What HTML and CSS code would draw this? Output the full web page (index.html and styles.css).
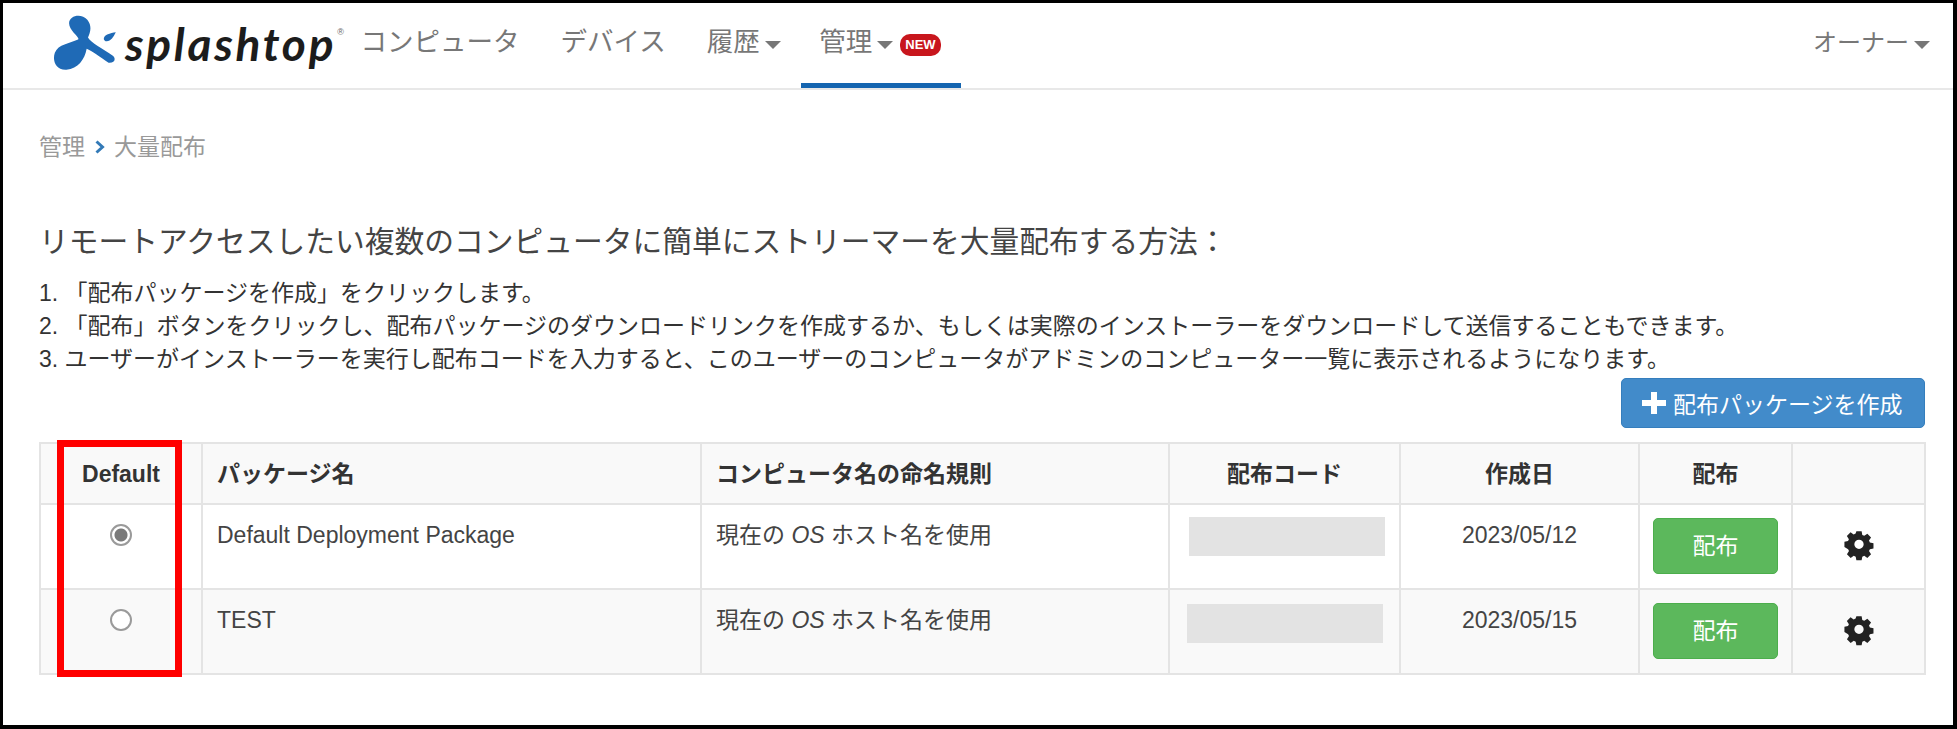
FILE: index.html
```html
<!DOCTYPE html>
<html lang="ja">
<head>
<meta charset="utf-8">
<title>大量配布</title>
<link rel="stylesheet" href="styles.css">
</head>
<body>
<div class="frame">
  <header class="topbar">
    <a class="logo">
      <svg class="logo-mark" viewBox="65 38 195 175" aria-hidden="true"><path d="M113 68C114 45 150 38 168 58C184 78 176 98 170 112C178 128 215 145 246 168C256 178 248 190 232 188C205 170 182 152 166 146C160 178 140 207 105 209C72 211 62 180 70 158C80 132 115 130 140 118C148 112 112 92 113 68Z"/><path d="M254 96C247 110 237 126 223 123C214 119 217 108 228 103C237 99 246 97 254 96Z"/></svg>
      <span class="logo-word">splashtop</span><span class="logo-reg">®</span>
    </a>
    <nav class="nav">
      <a class="nav-item">コンピュータ</a>
      <a class="nav-item">デバイス</a>
      <a class="nav-item">履歴<i class="caret"></i></a>
      <a class="nav-item active">管理<i class="caret"></i><span class="badge">NEW</span></a>
    </nav>
    <a class="owner">オーナー<i class="caret"></i></a>
  </header>
  <main class="content">
    <div class="crumbs"><span>管理</span><svg class="crumb-sep" viewBox="0 0 10 14" aria-hidden="true"><path d="M2 1.5L8 7L2 12.5"/></svg><span>大量配布</span></div>
    <h2 class="title">リモートアクセスしたい複数のコンピュータに簡単にストリーマーを大量配布する方法：</h2>
    <ol class="steps">
      <li>1. 「配布パッケージを作成」をクリックします。</li>
      <li>2. 「配布」ボタンをクリックし、配布パッケージのダウンロードリンクを作成するか、もしくは実際のインストーラーをダウンロードして送信することもできます。</li>
      <li>3. ユーザーがインストーラーを実行し配布コードを入力すると、このユーザーのコンピュータがアドミンのコンピューター一覧に表示されるようになります。</li>
    </ol>
    <div class="actions">
      <button class="btn-create"><svg class="plus" viewBox="0 0 24 22" aria-hidden="true"><path d="M9 0h6v8h9v6h-9v8H9v-8H0V8h9z"/></svg>配布パッケージを作成</button>
    </div>
    <div class="table-wrap">
      <table class="packages">
        <colgroup><col class="c1"><col class="c2"><col class="c3"><col class="c4"><col class="c5"><col class="c6"><col class="c7"></colgroup>
        <thead>
          <tr><th>Default</th><th class="left">パッケージ名</th><th class="left">コンピュータ名の命名規則</th><th>配布コード</th><th>作成日</th><th>配布</th><th></th></tr>
        </thead>
        <tbody>
          <tr>
            <td class="center"><span class="radio on"></span></td>
            <td>Default Deployment Package</td>
            <td>現在の <i>OS</i> ホスト名を使用</td>
            <td class="code"><div class="mask"></div></td>
            <td class="center">2023/05/12</td>
            <td class="center act"><button class="btn-go">配布</button></td>
            <td class="center act"><svg class="gear" viewBox="0 0 28 28" aria-hidden="true"><path fill-rule="evenodd" d="M11.300 1h5.400l.7 3.700 2 .9 3.200-2.100 3.800 3.800-2.100 3.200.9 2 3.700.7v5.400l-3.700.7-.9 2 2.100 3.200-3.800 3.800-3.200-2.100-2 .9-.7 3.700h-5.400l-.7-3.700-2-.9-3.200 2.100-3.800-3.800 2.100-3.200-.9-2L-1 17.100v-5.400l3.700-.7.9-2-2.100-3.200 3.800-3.800 3.200 2.100 2-.9zM14 9.500a4.800 4.800 0 1 0 0 9.600 4.800 4.800 0 0 0 0-9.600z" transform="translate(2.800 2.800) scale(.8)"/></svg></td>
          </tr>
          <tr>
            <td class="center"><span class="radio"></span></td>
            <td>TEST</td>
            <td>現在の <i>OS</i> ホスト名を使用</td>
            <td class="code"><div class="mask alt"></div></td>
            <td class="center">2023/05/15</td>
            <td class="center act"><button class="btn-go">配布</button></td>
            <td class="center act"><svg class="gear" viewBox="0 0 28 28" aria-hidden="true"><path fill-rule="evenodd" d="M11.300 1h5.400l.7 3.700 2 .9 3.200-2.100 3.800 3.800-2.100 3.200.9 2 3.700.7v5.400l-3.700.7-.9 2 2.100 3.200-3.800 3.800-3.200-2.100-2 .9-.7 3.700h-5.400l-.7-3.700-2-.9-3.200 2.100-3.800-3.800 2.100-3.200-.9-2L-1 17.100v-5.400l3.700-.7.9-2-2.100-3.200 3.800-3.800 3.200 2.100 2-.9zM14 9.500a4.800 4.800 0 1 0 0 9.600 4.800 4.800 0 0 0 0-9.600z" transform="translate(2.800 2.800) scale(.8)"/></svg></td>
          </tr>
        </tbody>
      </table>
      <div class="callout"></div>
    </div>
  </main>
</div>
</body>
</html>
```
FILE: styles.css
```css
* { box-sizing: border-box; }
html, body { margin: 0; padding: 0; background: #fff; }
body { width: 1957px; height: 729px; overflow: hidden; font-family: "Liberation Sans", "Noto Sans CJK JP", sans-serif; color: #333; }
.frame { width: 1957px; height: 729px; border-style: solid; border-color: #000; border-width: 3px 4px 4px 3px; background: #fff; }

.topbar { display: flex; align-items: flex-start; height: 87px; border-bottom: 2px solid #e8e8e8; padding-left: 50px; padding-right: 23px; }
.logo { display: flex; align-items: flex-start; width: 287px; flex: none; }
.logo-mark { width: 65px; height: 58px; margin-top: 10px; fill: #1f6ab6; flex: none; }
.logo-word { font-family: "Lato", sans-serif; font-style: italic; font-weight: 700; font-size: 46px; line-height: 50px; color: #1c1c1c; margin-top: 16px; margin-left: 7px; letter-spacing: 2.700px; }
.logo-reg { font-size: 9px; color: #666; margin-top: 24px; margin-left: 1px; }

.nav { display: flex; align-items: flex-start; height: 85px; }
.nav-item { display: flex; align-items: center; height: 85px; font-size: 26.500px; color: #777; padding: 0 20.500px 12px; white-space: nowrap; }
.nav-item.active { border-bottom: 5px solid #1565b0; padding-bottom: 7px; width: 160px; padding-left: 18px; }
.owner { display: flex; align-items: center; height: 74px; margin-left: auto; font-size: 24px; color: #777; white-space: nowrap; }
.caret { display: inline-block; margin-left: 5px; width: 0; height: 0; border-left: 8px solid transparent; border-right: 8px solid transparent; border-top: 8px solid #777; margin-top: 10px; }
.badge { display: inline-block; margin-left: 7px; width: 41px; height: 22px; border-radius: 10px; background: #c8161d; color: #fff; font-size: 13px; font-weight: 700; line-height: 22px; text-align: center; margin-top: 10px; }

.content { padding: 43px 28px 0 36px; }
.crumbs { display: flex; align-items: center; font-size: 23px; line-height: 28px; color: #999; }
.crumb-sep { width: 11px; height: 14px; margin: 0 9px; fill: none; stroke: #337ab7; stroke-width: 3; }
.title { margin: 63px 0 0; font-size: 29.750px; line-height: 36px; font-weight: 400; color: #444; white-space: nowrap; }
.steps { list-style: none; margin: 17px 0 0; padding: 0; font-size: 23px; line-height: 33px; color: #333; }
.steps li { white-space: nowrap; }

.actions { display: flex; justify-content: flex-end; margin-top: 2px; }
.btn-create { display: flex; align-items: center; width: 304px; height: 50px; padding: 0 0 0 20px; background: #428bca; border: 1px solid #357ebd; border-radius: 5px; color: #fff; font: inherit; font-size: 23px; }
.plus { width: 24px; height: 22px; fill: #fff; margin-right: 7px; }

.table-wrap { position: relative; margin-top: 14px; }
.packages { width: 1885px; table-layout: fixed; border-collapse: collapse; font-size: 23px; line-height: 26px; color: #444; }
.c1 { width: 162px; } .c2 { width: 499px; } .c3 { width: 468px; } .c4 { width: 231px; } .c5 { width: 239px; } .c6 { width: 153px; } .c7 { width: 133px; }
.packages th, .packages td { border: 2px solid #e4e4e4; }
.packages th { height: 61px; background: #f9f9f9; font-size: 23px; font-weight: 700; color: #333; text-align: center; padding: 0 14px; }
.packages th.left { text-align: left; }
.packages td { height: 85px; vertical-align: top; padding: 17px 14px 0; }
.packages tbody tr:nth-child(2) td { background: #f9f9f9; }
.packages td.center { text-align: center; }
.packages td.act { padding: 13px 0 0; }
.packages td.code { padding: 12px 0 0 19px; }
.mask { width: 196px; height: 39px; background: #e3e3e3; }
.mask.alt { margin: 2px 0 0 -2px; }
.radio { display: inline-block; width: 22px; height: 22px; border-radius: 50%; border: 2px solid #9a9a9a; background: #fff; vertical-align: top; margin-top: 2px; }
.radio.on { background: radial-gradient(circle, #7a7a7a 0 6px, #fff 7px); }
.btn-go { width: 125px; height: 56px; background: #5cb85c; border: 1px solid #4cae4c; border-radius: 5px; color: #fff; font: inherit; font-size: 23px; }
.gear { width: 34px; height: 34px; fill: #222; margin-top: 9px; }
.callout { position: absolute; left: 18px; top: -2px; width: 125px; height: 237px; border: 7px solid #f00; }
```
